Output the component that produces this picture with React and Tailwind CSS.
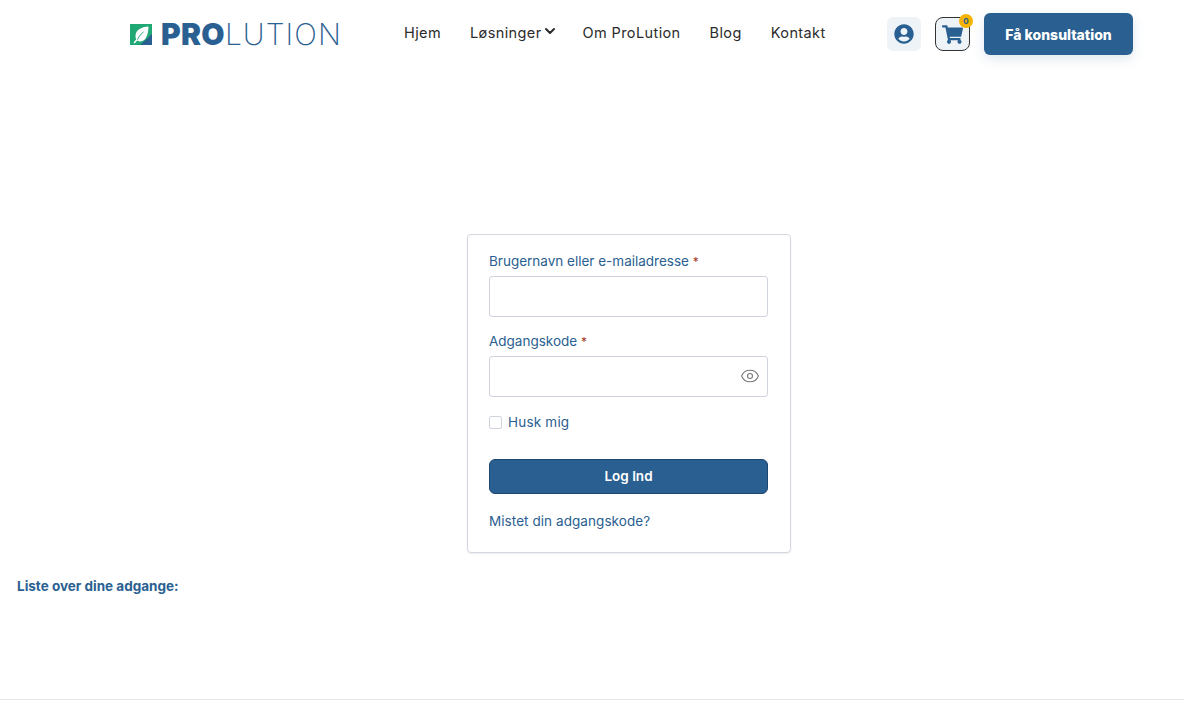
import React from 'react';
import { FaUserCircle, FaShoppingCart } from 'react-icons/fa';
import { ChevronDown, Eye } from 'lucide-react';

const LeafLogo = () => (
    <svg width="22" height="21" viewBox="0 0 22 21" className="shrink-0">
        <rect width="22" height="21" fill="#1fa774" />
        <path d="M22 10V21H10Z" fill="#2a6091" />
        <path d="M18.500 2.500C11 3 5.500 6 5.500 12c0 1.500.3 2.500.8 3.300L3.500 18.500l1.200 1 2.600-3c1 .6 2 .9 3 .9 5.500 0 8-6.500 8.200-14.900Z" fill="#fff" />
        <path d="M7.500 15.500c1.300-3 3.200-5.500 6-7.500" stroke="#1fa774" strokeWidth="1" fill="none" />
    </svg>
);

const NavLink = ({ children }) => (
    <a className="flex items-center text-[14.5px] tracking-[0.027em] text-[#2b2b2b]">{children}</a>
);

const App = () => {
    return (
        <div className="min-h-[708px] bg-white font-['Inter',sans-serif] overflow-hidden">
            {/* Header */}
            <header className="flex items-center h-[68px] pl-[130px] pr-[51px]">
                <div className="flex items-center w-[274px] shrink-0">
                    <LeafLogo />
                    <span className="ml-[9px] text-[30px] leading-none font-black text-[#2a6091] tracking-[0.01em]">PRO</span>
                    <span className="text-[30px] leading-none font-extralight text-[#2a6091] tracking-[0.035em]">LUTION</span>
                </div>
                <nav className="flex items-center gap-[29px] -mt-[2px]">
                    <NavLink>Hjem</NavLink>
                    <NavLink>
                        Løsninger
                        <ChevronDown size={16} strokeWidth={3} className="-mr-[4px] -mt-1" />
                    </NavLink>
                    <NavLink>Om ProLution</NavLink>
                    <NavLink>Blog</NavLink>
                    <NavLink>Kontakt</NavLink>
                </nav>
                <div className="flex items-center ml-auto">
                    <div className="flex items-center justify-center w-[34px] h-[34px] rounded-md bg-[#eef3f8] text-[#2a6091]">
                        <FaUserCircle size={20} />
                    </div>
                    <div className="relative flex items-center justify-center w-[35px] h-[34px] ml-[14px] rounded-lg border border-[#333] bg-[#eef3f8] text-[#2a6091]">
                        <FaShoppingCart size={21} />
                        <span className="absolute -top-[4px] -right-[4px] flex items-center justify-center w-[14px] h-[14px] rounded-full bg-[#f5b301] text-[8px] font-bold text-[#2a6091]">0</span>
                    </div>
                    <button className="w-[149px] h-[42px] ml-[14px] rounded-md bg-[#2a6091] text-[14px] font-extrabold text-white shadow-[0_4px_12px_rgba(42,96,145,0.15)]">
                        Få konsultation
                    </button>
                </div>
            </header>

            {/* Login */}
            <main className="pt-[166px]">
                <form className="ml-[467px] w-[324px] h-[319px] pl-[21px] pr-[22px] pt-[16px] rounded border border-[#d3d7e0] shadow-[0_1px_2px_rgba(0,0,0,0.08)] text-[#2a6091]">
                    <label className="block text-[13.5px] leading-[20px]">
                        Brugernavn eller e-mailadresse <span className="text-[12px] text-[#a5391f]">*</span>
                    </label>
                    <input className="block w-full h-[41px] mt-[4px] rounded-[3px] border border-[#cfd3dd]" />

                    <label className="block mt-[14px] text-[13.5px] leading-[20px]">
                        Adgangskode <span className="text-[12px] text-[#a5391f]">*</span>
                    </label>
                    <div className="relative mt-[4px]">
                        <input className="block w-full h-[41px] rounded-[3px] border border-[#cfd3dd]" />
                        <Eye size={20} strokeWidth={1.3} className="absolute right-[8px] top-[10px] text-[#777]" />
                    </div>

                    <label className="flex items-center gap-[6px] mt-[15px] text-[13.5px] leading-[20px] tracking-[0.015em]">
                        <span className="w-[13px] h-[13px] rounded-[2px] border border-[#cfd3dd]" />
                        Husk mig
                    </label>

                    <button type="button" className="block w-full h-[35px] mt-[27px] rounded-md border border-[#1d4571] bg-[#2a6091] text-[13.5px] font-semibold text-white">
                        Log Ind
                    </button>

                    <a className="block mt-[17px] text-[13.5px] leading-[20px] tracking-[0.005em]">Mistet din adgangskode?</a>
                </form>

                <p className="mt-[24px] ml-[17px] text-[13.5px] leading-[18px] font-bold text-[#2a6091]">Liste over dine adgange:</p>
            </main>

            <hr className="mt-[104px] border-[#e5e7eb]" />
        </div>
    );
};

export default App;
